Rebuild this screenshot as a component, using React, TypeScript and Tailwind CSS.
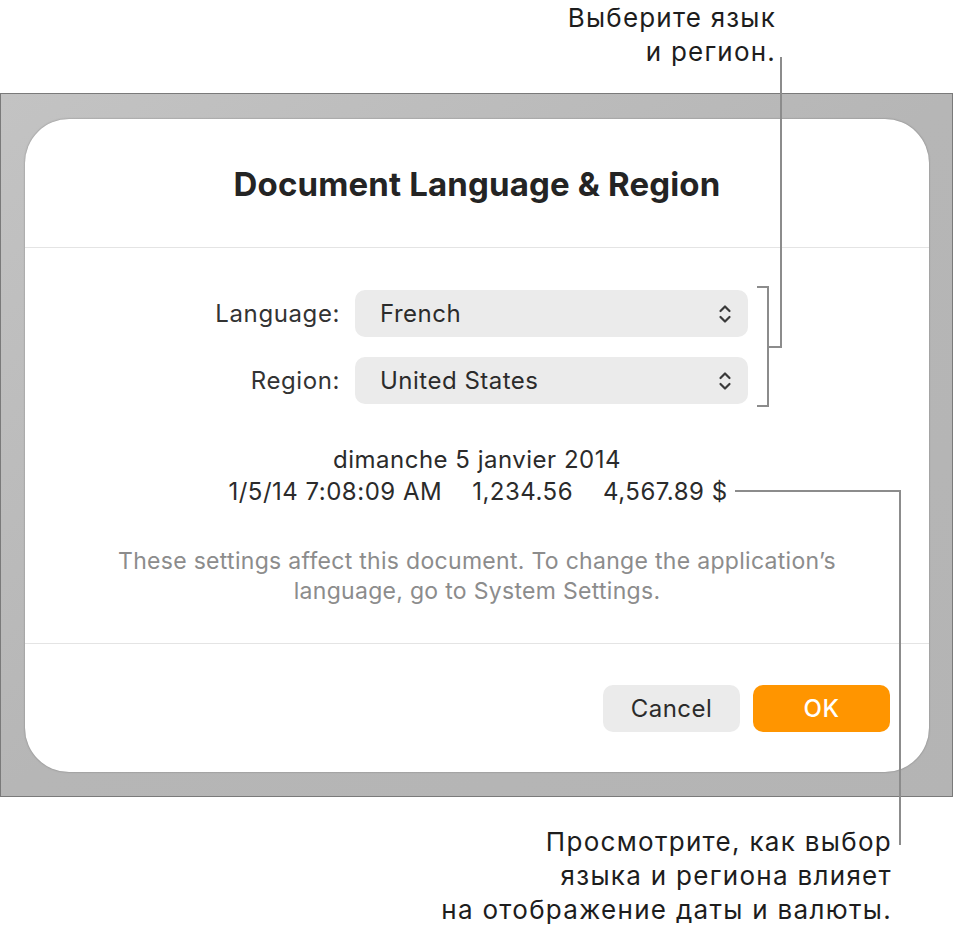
import React from "react"

const font = { fontFamily: "Inter, 'Noto Sans', sans-serif" }

function UpDown() {
    return (
        <svg width="14" height="22" viewBox="0 0 14 22" fill="none" stroke="#3a3a3a" strokeWidth="2.2" strokeLinecap="round" strokeLinejoin="round">
            <path d="M2.5 8 L7 3.5 L11.5 8" />
            <path d="M2.5 14 L7 18.5 L11.5 14" />
        </svg>
    )
}

function Popup({ value }: { value: string }) {
    return (
        <div className="flex h-[47px] w-[393px] items-center justify-between rounded-[10px] bg-[#ebebeb] pl-[25px] pr-[16px] text-[24px] tracking-[0.5px] text-[#2b2b2b]">
            <span>{value}</span>
            <UpDown />
        </div>
    )
}

export default function App() {
    return (
        <div className="relative h-[936px] w-[955px] overflow-hidden bg-white" style={font}>
            {/* callout above the dialog */}
            <div className="pr-[179px] pt-[1px] text-right text-[26px] leading-[34px] tracking-[1.2px] text-[#1d1d1d]">
                Выберите язык
                <br />и регион.
            </div>

            <div className="mt-[24px] h-[704px] w-[953px] border border-[#7a7a7a] bg-gradient-to-br from-[#c3c3c3] via-[#b6b6b6] to-[#b4b4b4] pb-[24px] pl-[24px] pr-[23px] pt-[25px]">
                <div className="flex h-[653px] flex-col rounded-[44px] bg-white shadow-[0_0_2px_rgba(0,0,0,0.35)]">
                    <div className="flex h-[129px] shrink-0 items-center justify-center border-b border-[#e4e4e4] pt-[4px] text-[33px] font-bold tracking-[0.15px] text-[#242424]">
                        Document Language &amp; Region
                    </div>

                    <div className="flex h-[396px] shrink-0 flex-col border-b border-[#e4e4e4] pt-[42px]">
                        <div className="ml-[189px] grid grid-cols-[126px_393px] items-center gap-x-[15px] gap-y-[20px] text-[24px] tracking-[0.6px] text-[#333]">
                            <span className="text-right">Language:</span>
                            <Popup value="French" />
                            <span className="text-right">Region:</span>
                            <Popup value="United States" />
                        </div>

                        <div className="mt-[40px] text-center text-[24px] leading-[32px] tracking-[0.5px] text-[#2b2b2b]">
                            <div>dimanche 5 janvier 2014</div>
                            <div className="flex justify-center gap-[30px] pl-[2px]">
                                <span>1/5/14 7:08:09 AM</span>
                                <span>1,234.56</span>
                                <span>4,567.89 $</span>
                            </div>
                        </div>

                        <p className="mt-[38px] text-center text-[23px] leading-[30px] tracking-[0.3px] text-[#8c8c8c]">
                            These settings affect this document. To change the application’s
                            <br />
                            language, go to System Settings.
                        </p>
                    </div>

                    <div className="flex flex-1 items-start justify-end gap-[13px] pr-[39px] pt-[41px] text-[24px] tracking-[0.5px]">
                        <button className="h-[47px] w-[137px] rounded-[10px] bg-[#ebebeb] text-[#2b2b2b]">Cancel</button>
                        <button className="h-[47px] w-[137px] rounded-[10px] bg-[#ff9500] font-medium text-white">OK</button>
                    </div>
                </div>
            </div>

            {/* callout below the dialog */}
            <div className="mt-[28px] pr-[63px] text-right text-[26px] leading-[34px] tracking-[1.3px] text-[#1d1d1d]">
                Просмотрите, как выбор
                <br />
                языка и региона влияет
                <br />
                на отображение даты и валюты.
            </div>

            {/* leader lines */}
            <div className="absolute left-[780px] top-[57px] h-[291px] w-[2px] bg-[#8c8c8c]" />
            <div className="absolute left-[768px] top-[346px] h-[2px] w-[14px] bg-[#8c8c8c]" />
            <div className="absolute left-[767px] top-[286px] h-[121px] w-[2px] bg-[#8c8c8c]" />
            <div className="absolute left-[757px] top-[286px] h-[2px] w-[12px] bg-[#8c8c8c]" />
            <div className="absolute left-[757px] top-[405px] h-[2px] w-[12px] bg-[#8c8c8c]" />
            <div className="absolute left-[735px] top-[490px] h-[2px] w-[166px] bg-[#8c8c8c]" />
            <div className="absolute left-[899px] top-[490px] h-[355px] w-[2px] bg-[#8c8c8c]" />
        </div>
    )
}
